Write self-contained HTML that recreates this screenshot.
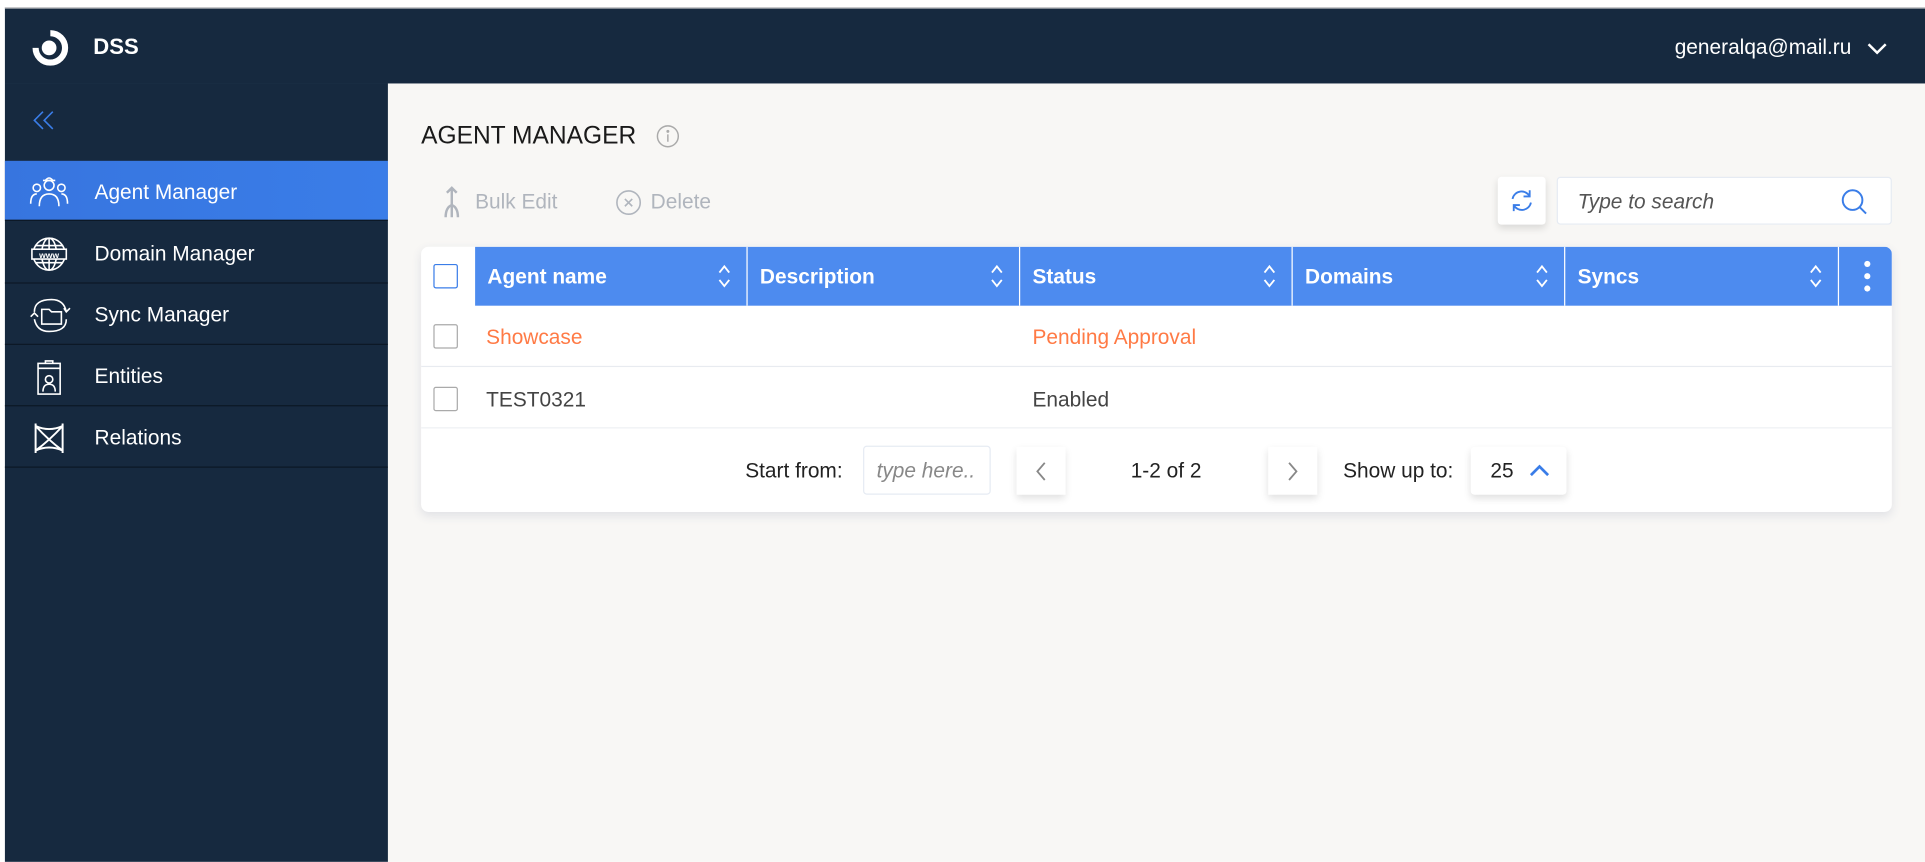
<!DOCTYPE html>
<html><head><meta charset="utf-8">
<style>
*{box-sizing:border-box;margin:0;padding:0}
html,body{width:1925px;height:862px;overflow:hidden;background:#fff;font-family:"Liberation Sans",sans-serif}
#s{position:absolute;left:0;top:0;width:1568px;height:702px;transform:scale(1.22768);transform-origin:0 0;background:#fff}
.a{position:absolute}
.hdr{left:4px;top:6px;width:1564px;height:62px;background:#16293f;border-top:1px solid #ccc}
.side{left:4px;top:68px;width:312px;height:634px;background:#16293f}
.main{left:316px;top:68px;width:1252px;height:634px;background:#f8f7f5}
.item{position:absolute;left:0;width:312px;height:50px;border-bottom:1px solid #0c1826;color:#fff;font-size:17px;line-height:52px;padding-left:73px}
.item svg{position:absolute;left:20px;top:11px}
.act{background:linear-gradient(90deg,#3775df,#3a7de8);}
.th{position:absolute;top:0;height:48px;color:#fff;font-size:17px;font-weight:bold;line-height:50px;padding-left:10px;border-left:1px solid #fff}
.th svg{position:absolute;right:12px;top:14px}
.cb{position:absolute;left:10px;width:20px;height:20px;border:1px solid #aaa;border-radius:2px;background:#fff}
.cell{position:absolute;font-size:17px;line-height:52px}
.btn{position:absolute;background:#fff;box-shadow:0 3px 6px rgba(0,0,0,.12);border-radius:3px}
</style></head><body>
<div id="s">
<div class="a hdr">
  <svg class="a" style="left:21px;top:16px" width="32" height="32" viewBox="0 0 32 32"><path d="M16 4 A12 12 0 1 1 4 16" stroke="#fff" stroke-width="5" fill="none"/><circle cx="15" cy="16" r="6" fill="#fff"/></svg>
  <div class="a" style="left:72px;top:21px;color:#fff;font-size:18px;font-weight:bold">DSS</div>
  <div class="a" style="right:60px;top:22px;color:#fff;font-size:17px">generalqa@mail.ru</div>
  <svg class="a" style="left:1516px;top:27px" width="18" height="12" viewBox="0 0 18 12"><path d="M2 2 L9 9 L16 2" stroke="#fff" stroke-width="2" fill="none"/></svg>
</div>
<div class="a side">
  <svg class="a" style="left:22px;top:22px" width="22" height="16" viewBox="0 0 22 16"><path d="M9 1 L2 8 L9 15 M17 1 L10 8 L17 15" stroke="#3a7de8" stroke-width="1.3" fill="none"/></svg>
  <div class="item act" style="top:63px;height:49px;border-bottom:1px solid #0c1826">
    <svg width="32" height="28" viewBox="0 0 32 28" fill="none" stroke="#fff" stroke-width="1.3"><circle cx="16" cy="9" r="4"/><path d="M11 5 h10 M13 5 q3 -4 6 0"/><path d="M8 26 q0 -10 8 -10 q8 0 8 10"/><circle cx="6" cy="11" r="3"/><circle cx="26" cy="11" r="3"/><path d="M1 24 q0 -8 5 -8 M31 24 q0 -8 -5 -8"/></svg>
    Agent Manager</div>
  <div class="item" style="top:113px">
    <svg width="32" height="30" viewBox="0 0 32 30" fill="none" stroke="#fff" stroke-width="1.3"><circle cx="16" cy="15" r="13"/><ellipse cx="16" cy="15" rx="6" ry="13"/><path d="M16 2 v26 M5 8 h22 M5 22 h22"/><rect x="2" y="11" width="28" height="8" fill="#16293f"/><text x="16" y="18" font-size="7" fill="#fff" stroke="none" text-anchor="middle" font-weight="bold">www</text></svg>
    Domain Manager</div>
  <div class="item" style="top:163px">
    <svg width="34" height="30" viewBox="0 0 34 30" fill="none" stroke="#fff" stroke-width="1.3"><path d="M10 10 h6 l2 2 h8 v10 h-16 z"/><path d="M4 12 q0 -10 14 -10 q10 0 12 10 M30 18 q0 10 -14 10 q-10 0 -12 -10 M28 9 l2 3 l3 -3 M1 16 l3 -3 l3 3"/></svg>
    Sync Manager</div>
  <div class="item" style="top:213px">
    <svg width="32" height="30" viewBox="0 0 32 30" fill="none" stroke="#fff" stroke-width="1.3"><rect x="7" y="4" width="18" height="25"/><path d="M7 8 h18 M13 4 v-2 h6 v2"/><circle cx="16" cy="17" r="3"/><path d="M11 27 q0 -6 5 -6 q5 0 5 6"/></svg>
    Entities</div>
  <div class="item" style="top:263px">
    <svg width="32" height="30" viewBox="0 0 32 30" fill="none" stroke="#fff" stroke-width="1.6"><path d="M5 3 v24 M27 3 v24 M5 5 q11 12 22 20 M27 5 q-11 12 -22 20 M5 5 q11 5 22 0 M5 25 q11 -5 22 0"/></svg>
    Relations</div>
</div>
<div class="a main"></div>
<div class="a" style="left:343px;top:100px;font-size:20px;color:#1a1a1a">AGENT MANAGER</div>
<svg class="a" style="left:534px;top:101px" width="20" height="20" viewBox="0 0 20 20" fill="none" stroke="#aaa" stroke-width="1.2"><circle cx="10" cy="10" r="8.5"/><path d="M10 8.5 v6"/><circle cx="10" cy="6" r=".6" fill="#aaa"/></svg>
<svg class="a" style="left:361px;top:151px" width="14" height="27" viewBox="0 0 14 27" fill="none" stroke="#b0b5bd" stroke-width="2"><path d="M7 2 v14 M3 6 l4 -4 l4 4 M7 16 q-5 2 -5 10 M7 16 q5 2 5 10 M7 16 v10"/></svg>
<div class="a" style="left:387px;top:155px;font-size:17px;color:#b0b5bd">Bulk Edit</div>
<svg class="a" style="left:501px;top:154px" width="22" height="22" viewBox="0 0 22 22" fill="none" stroke="#b0b5bd" stroke-width="1.3"><circle cx="11" cy="11" r="9.5"/><path d="M8 8 l6 6 M14 8 l-6 6"/></svg>
<div class="a" style="left:530px;top:155px;font-size:17px;color:#b0b5bd">Delete</div>
<div class="btn" style="left:1220px;top:144px;width:39px;height:39px">
  <svg class="a" style="left:9px;top:9px" width="21" height="21" viewBox="0 0 21 21" fill="none" stroke="#3a7de8" stroke-width="1.5"><path d="M3 9 a7.5 7.5 0 0 1 14 -2 M18 12 a7.5 7.5 0 0 1 -14 2 M17 2 v5 h-5 M4 19 v-5 h5"/></svg>
</div>
<div class="a" style="left:1268px;top:144px;width:273px;height:39px;background:#fff;border:1px solid #e6ebf3;border-radius:3px">
  <div class="a" style="left:16px;top:10px;font-size:17px;font-style:italic;color:#555">Type to search</div>
  <svg class="a" style="left:230px;top:8px" width="24" height="24" viewBox="0 0 24 24" fill="none" stroke="#3a7de8" stroke-width="1.6"><circle cx="10" cy="10" r="8"/><path d="M16 16 l5 5"/></svg>
</div>
<div class="a" style="left:343px;top:201px;width:1198px;height:216px;background:#fff;border-radius:6px;box-shadow:0 3px 8px rgba(60,70,120,.12);overflow:hidden">
  <div class="a" style="left:44px;top:0;width:1154px;height:48px;background:#4d8bef"></div>
  <div class="cb" style="top:14px;border:1.5px solid #3a7de8"></div>
  <div class="th" style="left:44px;width:221px;border-left:none">Agent name<svg width="12" height="20" viewBox="0 0 12 20" fill="none" stroke="#fff" stroke-width="1.5"><path d="M2 7 l4 -5 l4 5 M2 13 l4 5 l4 -5"/></svg></div>
  <div class="th" style="left:265px;width:222px">Description<svg width="12" height="20" viewBox="0 0 12 20" fill="none" stroke="#fff" stroke-width="1.5"><path d="M2 7 l4 -5 l4 5 M2 13 l4 5 l4 -5"/></svg></div>
  <div class="th" style="left:487px;width:222px">Status<svg width="12" height="20" viewBox="0 0 12 20" fill="none" stroke="#fff" stroke-width="1.5"><path d="M2 7 l4 -5 l4 5 M2 13 l4 5 l4 -5"/></svg></div>
  <div class="th" style="left:709px;width:222px">Domains<svg width="12" height="20" viewBox="0 0 12 20" fill="none" stroke="#fff" stroke-width="1.5"><path d="M2 7 l4 -5 l4 5 M2 13 l4 5 l4 -5"/></svg></div>
  <div class="th" style="left:931px;width:223px">Syncs<svg width="12" height="20" viewBox="0 0 12 20" fill="none" stroke="#fff" stroke-width="1.5"><path d="M2 7 l4 -5 l4 5 M2 13 l4 5 l4 -5"/></svg></div>
  <div class="th" style="left:1154px;width:44px"><svg style="right:17px;top:11px" width="6" height="26" viewBox="0 0 6 26" fill="#fff"><circle cx="3" cy="3" r="2.5"/><circle cx="3" cy="13" r="2.5"/><circle cx="3" cy="23" r="2.5"/></svg></div>
  <div class="a" style="left:0;top:48px;width:1198px;height:50px;border-bottom:1px solid #e8ebf0"></div>
  <div class="cb" style="top:63px"></div>
  <div class="cell" style="left:53px;top:48px;color:#ff7a45">Showcase</div>
  <div class="cell" style="left:498px;top:48px;color:#ff7a45">Pending Approval</div>
  <div class="a" style="left:0;top:98px;width:1198px;height:50px;border-bottom:1px solid #eef0f4"></div>
  <div class="cb" style="top:114px"></div>
  <div class="cell" style="left:53px;top:99px;color:#444">TEST0321</div>
  <div class="cell" style="left:498px;top:99px;color:#444">Enabled</div>
  <div class="a" style="left:264px;top:173px;font-size:17px;color:#222">Start from:</div>
  <div class="a" style="left:360px;top:162px;width:104px;height:40px;border:1px solid #e6ebf3;border-radius:3px;font-size:17px;font-style:italic;color:#888;padding:10px 0 0 10px">type here..</div>
  <div class="btn" style="left:485px;top:163px;width:40px;height:39px;border-radius:0"><svg class="a" style="left:14px;top:11px" width="12" height="18" viewBox="0 0 12 18" fill="none" stroke="#888" stroke-width="1.5"><path d="M9 2 L3 9 L9 16"/></svg></div>
  <div class="a" style="left:578px;top:173px;font-size:17px;color:#222">1-2 of 2</div>
  <div class="btn" style="left:690px;top:163px;width:40px;height:39px;border-radius:0"><svg class="a" style="left:14px;top:11px" width="12" height="18" viewBox="0 0 12 18" fill="none" stroke="#888" stroke-width="1.5"><path d="M3 2 L9 9 L3 16"/></svg></div>
  <div class="a" style="left:751px;top:173px;font-size:17px;color:#222">Show up to:</div>
  <div class="btn" style="left:855px;top:163px;width:78px;height:39px"><div class="a" style="left:16px;top:10px;font-size:17px;color:#222">25</div><svg class="a" style="left:47px;top:13px" width="18" height="12" viewBox="0 0 18 12" fill="none" stroke="#3a7de8" stroke-width="2.2"><path d="M2 10 L9 3 L16 10"/></svg></div>
</div>
</div>
</body></html>
